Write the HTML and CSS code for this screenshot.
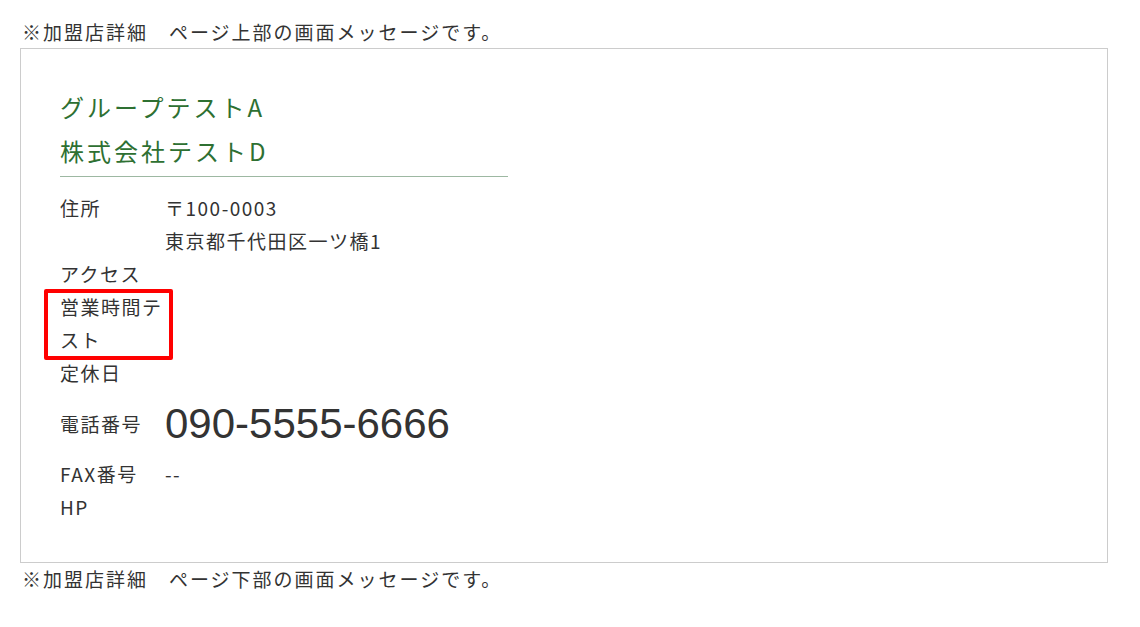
FILE: index.html
```html
<!DOCTYPE html>
<html lang="ja">
<head>
    <meta charset="UTF-8">
    <meta name="viewport" content="width=device-width, initial-scale=1.0">
    <title>加盟店詳細</title>
    <link rel="stylesheet" href="styles.css">
</head>
<body>
    <div class="page">
        <p class="page-message">※加盟店詳細　ページ上部の画面メッセージです。</p>

        <div class="shop-box">
            <div class="shop-head">
                <h1 class="shop-name">グループテストA</h1>
                <h1 class="shop-name">株式会社テストD</h1>
            </div>

            <dl class="shop-info">
                <div class="info-row">
                    <dt>住所</dt>
                    <dd>〒100-0003<br>東京都千代田区一ツ橋1</dd>
                </div>
                <div class="info-row">
                    <dt>アクセス</dt>
                    <dd></dd>
                </div>
                <div class="info-row">
                    <dt class="marked">営業時間テスト<span class="mark"></span></dt>
                    <dd></dd>
                </div>
                <div class="info-row">
                    <dt>定休日</dt>
                    <dd></dd>
                </div>
                <div class="info-row tel-row">
                    <dt>電話番号</dt>
                    <dd class="tel">090-5555-6666</dd>
                </div>
                <div class="info-row">
                    <dt>FAX番号</dt>
                    <dd>--</dd>
                </div>
                <div class="info-row">
                    <dt>HP</dt>
                    <dd></dd>
                </div>
            </dl>
        </div>

        <p class="page-message">※加盟店詳細　ページ下部の画面メッセージです。</p>
    </div>
</body>
</html>
```

FILE: styles.css
```css
body {
    margin: 0;
    background: #fff;
    color: #333;
    font-family: "Noto Sans CJK JP", "Noto Sans", sans-serif;
    font-size: 19px;
}
.page {
    width: 1088px;
    padding: 16px 0 0 20px;
}
.page-message {
    margin: 0;
    padding-left: 2px;
    line-height: 32px;
    letter-spacing: 2px;
}
.shop-box {
    border: 1px solid #ccc;
    padding: 36px 39px 39px;
}
.shop-head {
    width: 448px;
    padding-bottom: 3px;
    border-bottom: 1px solid #9db8a2;
}
.shop-name {
    margin: 0;
    color: #2e7032;
    font-size: 24px;
    font-weight: normal;
    line-height: 44px;
    letter-spacing: 3px;
}
.shop-info {
    margin: 14px 0 0;
}
.info-row {
    display: flex;
    line-height: 33px;
    letter-spacing: 1.5px;
}
.info-row dt {
    width: 105px;
    flex-shrink: 0;
}
.info-row dd {
    margin: 0;
}
.marked {
    position: relative;
}
.mark {
    position: absolute;
    left: -16px;
    right: -8px;
    top: -1px;
    bottom: -4px;
    border: 4px solid #f00;
    border-radius: 2px;
}
.tel-row {
    align-items: center;
    padding: 9px 0 8px;
}
.tel {
    font-family: "Liberation Sans", Arial, sans-serif;
    font-size: 42px;
    line-height: 51px;
    letter-spacing: 0;
}
```
